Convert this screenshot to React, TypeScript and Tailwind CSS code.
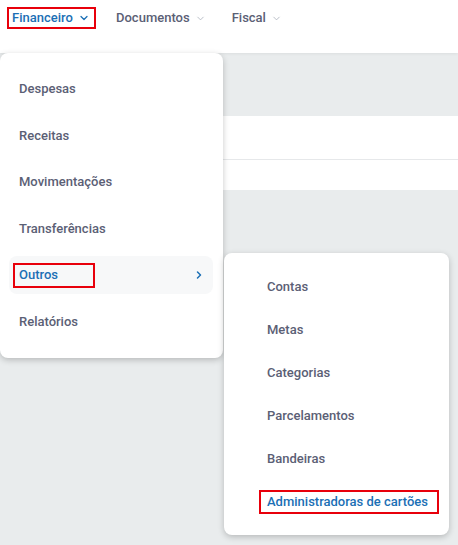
import { ChevronDown, ChevronRight } from "lucide-react"

const mainItems = ["Despesas", "Receitas", "Movimentações", "Transferências", "Outros", "Relatórios"]
const subItems = ["Contas", "Metas", "Categorias", "Parcelamentos", "Bandeiras", "Administradoras de cartões"]

export default function App() {
  return (
    <div
      className="relative w-[458px] h-[545px] overflow-hidden bg-[#e9eced] text-[13px] font-medium text-[#5b6075]"
      style={{ fontFamily: "Roboto, 'Liberation Sans', sans-serif" }}
    >
      {/* Top nav */}
      <header className="h-[53px] bg-white flex items-start pt-[7px] pl-[7px] shadow-[0_1px_3px_rgba(0,0,0,0.06)] relative z-0">
        <div className="w-[89px] h-[22px] border-2 border-[#e8000b] flex items-center pl-[3px] gap-[5px] text-[#1b6fb5]">
          Financeiro
          <ChevronDown className="w-[12px] h-[12px]" strokeWidth={2.5} />
        </div>
        <div className="h-[22px] flex items-center ml-[20px] gap-[5px]">
          Documentos
          <ChevronDown className="w-[11px] h-[11px] text-[#aab0bb]" strokeWidth={1.75} />
        </div>
        <div className="h-[22px] flex items-center ml-[26px] gap-[5px]">
          Fiscal
          <ChevronDown className="w-[11px] h-[11px] text-[#aab0bb]" strokeWidth={1.75} />
        </div>
      </header>

      {/* Page content behind menus */}
      <div className="mt-[63px] bg-white h-[74px] flex flex-col">
        <div className="h-[44px] border-b border-[#e6e8ea]" />
      </div>

      {/* Main dropdown */}
      <div className="absolute left-0 top-[53px] w-[223px] bg-white rounded-lg shadow-[0_2px_6px_rgba(0,0,0,0.22)] pt-[12.5px] pb-[12.5px]">
        {mainItems.map((item) =>
          item === "Outros" ? (
            <div key={item} className="h-[46.6px] flex items-center">
              <div className="mx-[9px] w-[204px] h-[38px] rounded-lg bg-[#f7f8f9] flex items-center pl-[4px] pr-[8px] text-[#1b6fb5]">
                <div className="w-[82px] h-[25px] border-2 border-[#e8000b] flex items-center pl-[4px]">{item}</div>
                <ChevronRight className="ml-auto w-[12px] h-[12px]" strokeWidth={3} />
              </div>
            </div>
          ) : (
            <div key={item} className="h-[46.6px] flex items-center pl-[19px]">
              {item}
            </div>
          ),
        )}
      </div>

      {/* Sub dropdown */}
      <div className="absolute left-[224px] top-[253px] w-[225px] bg-white rounded-lg shadow-[0_2px_6px_rgba(0,0,0,0.22)] pt-[12px] pb-[12px]">
        {subItems.map((item) =>
          item === "Administradoras de cartões" ? (
            <div key={item} className="h-[43px] flex items-center pl-[35px]">
              <div className="w-[180px] h-[24px] border-2 border-[#e8000b] flex items-center pl-[6px] text-[#1b6fb5]">
                {item}
              </div>
            </div>
          ) : (
            <div key={item} className="h-[43px] flex items-center pl-[43px]">
              {item}
            </div>
          ),
        )}
      </div>
    </div>
  )
}
